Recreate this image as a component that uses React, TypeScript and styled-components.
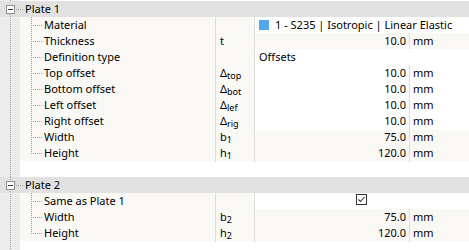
import React from "react"
import styled, { createGlobalStyle } from "styled-components"

const GlobalStyle = createGlobalStyle`
  html, body {
    margin: 0;
    padding: 0;
    background: #fff;
  }
  body {
    font-family: "Noto Sans", "Segoe UI", sans-serif;
    font-size: 11px;
    color: #000;
  }
`

const dotV = "linear-gradient(to bottom, #a3a3a3 50%, transparent 50%)"
const dotH = "linear-gradient(to right, #a3a3a3 50%, transparent 50%)"

const Page = styled.div`
  width: 469px;
  height: 250px;
  overflow: hidden;
  padding-top: 1px;
  box-sizing: border-box;
  background:
    ${dotV} 10px 0 / 1px 2px repeat-y,
    linear-gradient(#ececec, #ececec) 0 0 / 20px 100% no-repeat,
    #fff;
`

const GroupHeader = styled.div<{ $hasPrev?: boolean }>`
  position: relative;
  height: 16px;
  display: flex;
  align-items: center;
  background: #e1e1e1;
  &::before {
    content: "";
    position: absolute;
    left: 10px;
    top: ${p => (p.$hasPrev ? "0" : "13px")};
    bottom: 0;
    width: 1px;
    background: ${dotV} 0 0 / 1px 2px repeat-y;
  }
`

const Toggle = styled.span`
  position: relative;
  z-index: 1;
  flex: none;
  margin-left: 6px;
  width: 9px;
  height: 9px;
  box-sizing: border-box;
  border: 1px solid #8f8f8f;
  background: #fff;
  &::after {
    content: "";
    position: absolute;
    left: 1px;
    top: 3px;
    width: 5px;
    height: 1px;
    background: #3c3c3c;
  }
`

const Connector = styled.span`
  flex: none;
  width: 8px;
  height: 1px;
  margin-left: 1px;
  background: ${dotH} 0 0 / 2px 1px repeat-x;
`

const GroupTitle = styled.span`
  margin-left: 1px;
  line-height: 16px;
`

const Body = styled.div`
  margin-left: 20px;
  background: #f9f8f5;
`

const Row = styled.div`
  display: grid;
  grid-template-columns: 195px 39px 155px 60px;
  height: 16px;
  line-height: 16px;
`

const NameCell = styled.div`
  display: flex;
  align-items: stretch;
  white-space: nowrap;
`

const Branch = styled.span<{ $last?: boolean }>`
  position: relative;
  flex: none;
  width: 24px;
  &::before {
    content: "";
    position: absolute;
    left: 11px;
    top: 0;
    height: ${p => (p.$last ? "9px" : "16px")};
    width: 1px;
    background: ${dotV} 0 0 / 1px 2px repeat-y;
  }
  &::after {
    content: "";
    position: absolute;
    left: 12px;
    top: 8px;
    width: 10px;
    height: 1px;
    background: ${dotH} 1px 0 / 2px 1px repeat-x;
  }
`

const SymbolCell = styled.div`
  border-left: 1px solid #dcdcdc;
  padding-left: 4px;
  white-space: nowrap;
`

const Sub = styled.span`
  font-size: 9px;
  position: relative;
  top: 2px;
`

const ValueCell = styled.div<{ $ro?: boolean }>`
  border-left: 1px solid #dcdcdc;
  background: ${p => (p.$ro ? "transparent" : "#fff")};
  text-align: right;
  padding-right: 3px;
`

const UnitCell = styled.div<{ $ro?: boolean }>`
  border-left: 1px solid #dcdcdc;
  background: ${p => (p.$ro ? "transparent" : "#fff")};
  padding-left: 3px;
`

const WideCell = styled.div<{ $center?: boolean }>`
  grid-column: span 2;
  border-left: 1px solid #dcdcdc;
  background: #fff;
  padding-left: ${p => (p.$center ? "0" : "4px")};
  display: flex;
  align-items: center;
  justify-content: ${p => (p.$center ? "center" : "flex-start")};
  white-space: nowrap;
`

const Swatch = styled.span`
  flex: none;
  width: 10px;
  height: 10px;
  margin: 0 6px 0 0;
  background: #55a5ec;
`

const Spacer = styled.div`
  height: 16px;
  margin-left: 20px;
  background: #fff;
`

const CheckBox = () => (
  <svg width="11" height="11" viewBox="0 0 11 11" style={{ marginTop: -3, marginLeft: -2 }}>
    <rect x="0.5" y="0.5" width="10" height="10" fill="#fff" stroke="#333" />
    <path d="M2.5 5.5 L4.5 7.5 L8.5 3" fill="none" stroke="#333" strokeWidth="1.1" />
  </svg>
)

type Item = {
  label: string
  sym?: React.ReactNode
  value?: string
  unit?: string
  ro?: boolean
  wide?: React.ReactNode
  center?: boolean
}

const delta = (s: string) => (
  <>
    Δ<Sub>{s}</Sub>
  </>
)
const sym = (b: string, s: string) => (
  <>
    {b}
    <Sub>{s}</Sub>
  </>
)

const plate1: Item[] = [
  {
    label: "Material",
    wide: (
      <>
        <Swatch />1 - S235 | Isotropic | Linear Elastic
      </>
    ),
  },
  { label: "Thickness", sym: "t", value: "10.0", unit: "mm", ro: true },
  { label: "Definition type", wide: "Offsets" },
  { label: "Top offset", sym: delta("top"), value: "10.0", unit: "mm" },
  { label: "Bottom offset", sym: delta("bot"), value: "10.0", unit: "mm" },
  { label: "Left offset", sym: delta("lef"), value: "10.0", unit: "mm" },
  { label: "Right offset", sym: delta("rig"), value: "10.0", unit: "mm" },
  { label: "Width", sym: sym("b", "1"), value: "75.0", unit: "mm", ro: true },
  { label: "Height", sym: sym("h", "1"), value: "120.0", unit: "mm", ro: true },
]

const plate2: Item[] = [
  { label: "Same as Plate 1", wide: <CheckBox />, center: true },
  { label: "Width", sym: sym("b", "2"), value: "75.0", unit: "mm", ro: true },
  { label: "Height", sym: sym("h", "2"), value: "120.0", unit: "mm", ro: true },
]

const Group = ({ title, items, hasPrev }: { title: string; items: Item[]; hasPrev?: boolean }) => (
  <>
    <GroupHeader $hasPrev={hasPrev}>
      <Toggle />
      <Connector />
      <GroupTitle>{title}</GroupTitle>
    </GroupHeader>
    <Body>
      {items.map((it, i) => (
        <Row key={it.label + i}>
          <NameCell>
            <Branch $last={i === items.length - 1} />
            {it.label}
          </NameCell>
          <SymbolCell>{it.sym}</SymbolCell>
          {it.wide !== undefined ? (
            <WideCell $center={it.center}>{it.wide}</WideCell>
          ) : (
            <>
              <ValueCell $ro={it.ro}>{it.value}</ValueCell>
              <UnitCell $ro={it.ro}>{it.unit}</UnitCell>
            </>
          )}
        </Row>
      ))}
    </Body>
  </>
)

export default function App() {
  return (
    <>
      <GlobalStyle />
      <Page>
        <Group title="Plate 1" items={plate1} />
        <Spacer />
        <Group title="Plate 2" items={plate2} hasPrev />
      </Page>
    </>
  )
}
